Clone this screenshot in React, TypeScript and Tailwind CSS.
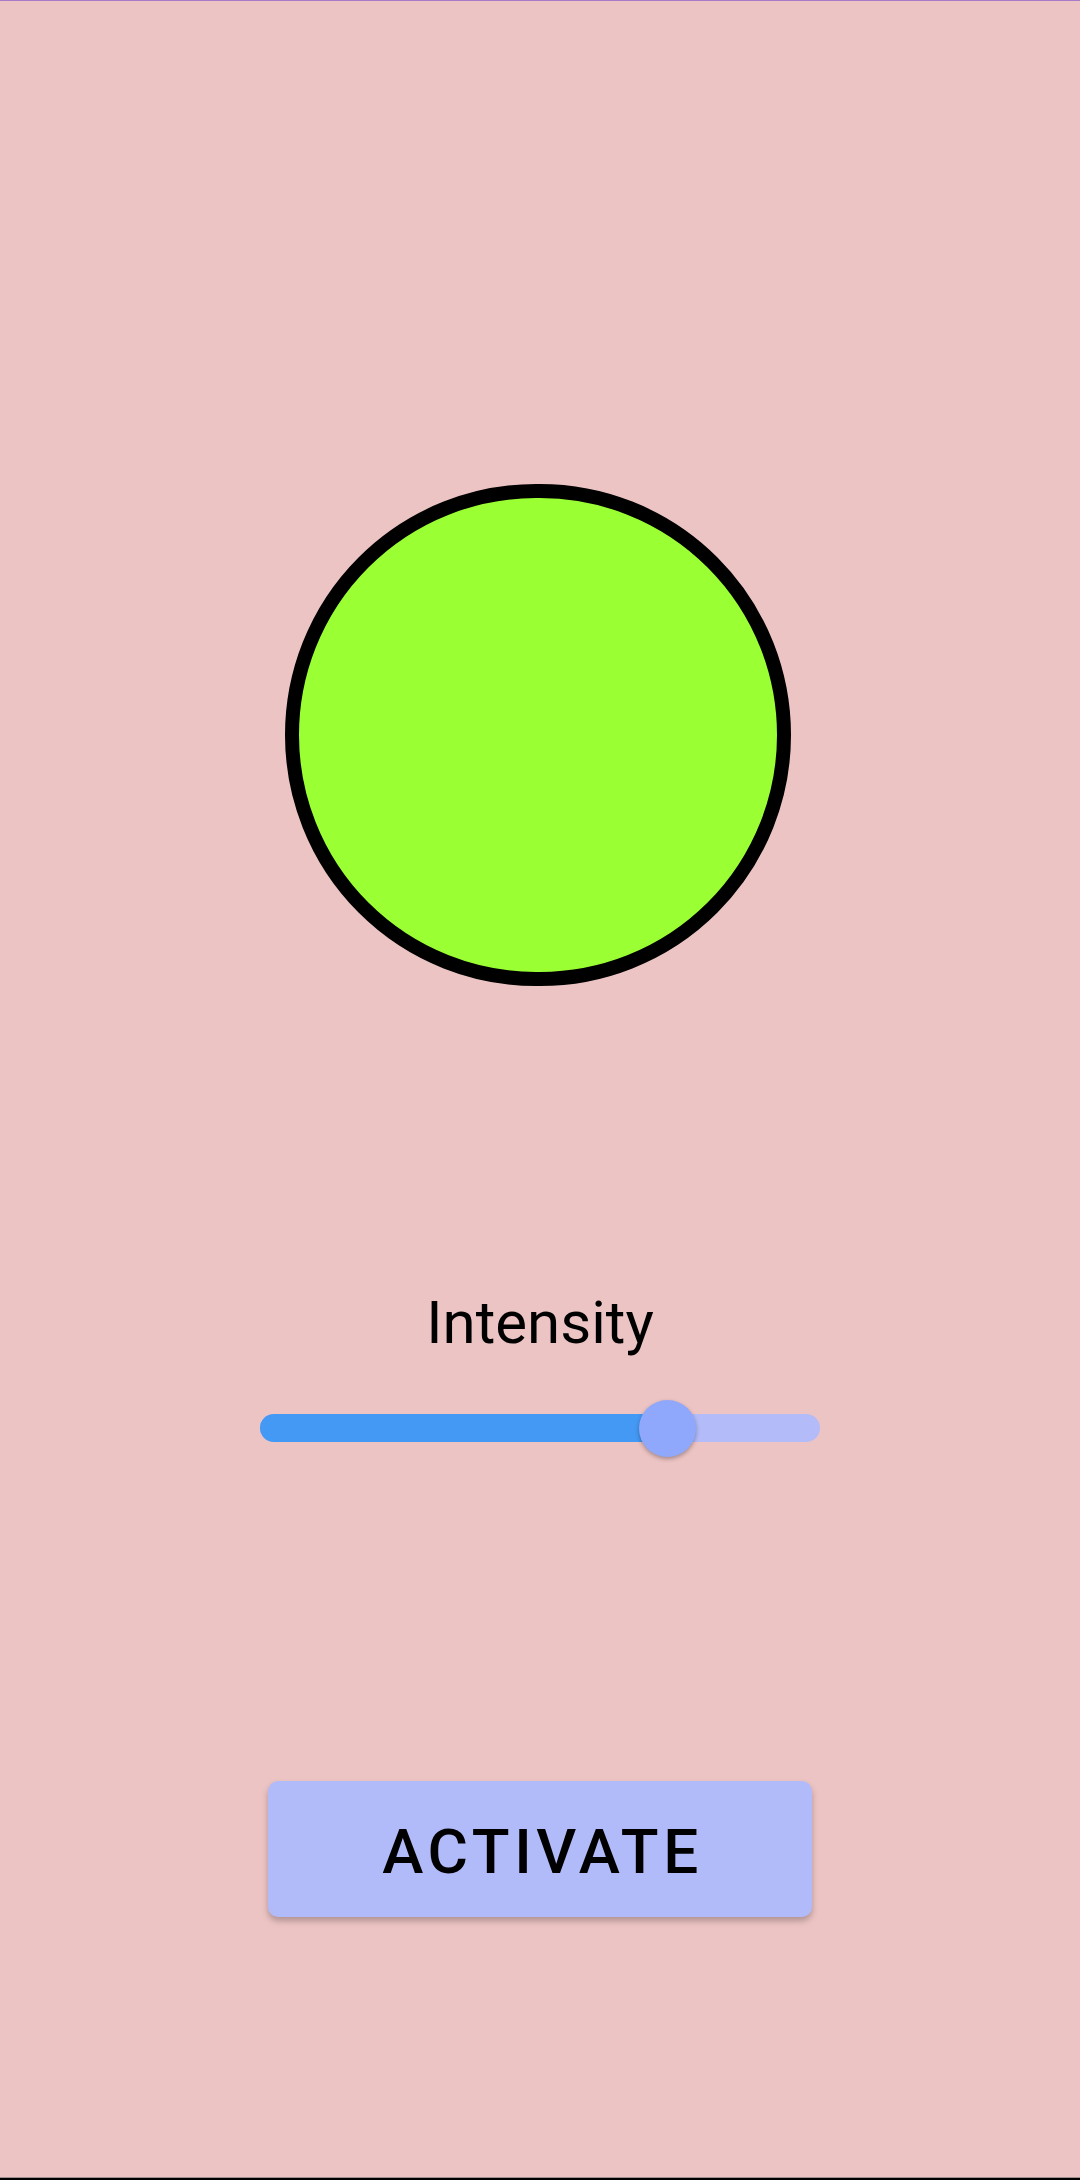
import React from "react";

export default function App() {
  return (
    <div
      className="w-[1080px] h-[2180px] bg-[#edc4c4] flex flex-col items-center"
      style={{ fontFamily: "Roboto, 'Noto Sans', sans-serif" }}
    >
      <div className="w-full h-[1px] bg-[#a77bc8] shrink-0" />
      <div className="mt-[483px] mr-[4px] w-[506px] h-[502px] rounded-full bg-[#9aff33] border-[14px] border-black shrink-0" />
      <div className="mt-[307px] text-[60px] leading-none text-black shrink-0">Intensity</div>
      <div className="mt-[47px] relative w-[560px] h-[56px] flex items-center shrink-0">
        <div className="w-full h-[28px] rounded-full bg-[#b3bbf9] flex">
          <div className="w-[407px] h-full rounded-l-full bg-[#4499f5]" />
        </div>
        <div className="absolute left-[379px] top-[0px] w-[57px] h-[57px] rounded-full bg-[#8fa8fb] shadow-[0_2px_4px_rgba(0,0,0,0.3)]" />
      </div>
      <button className="mt-[325px] w-[544px] h-[136px] rounded-[10px] bg-[#b2bbf9] shadow-[0_4px_6px_rgba(0,0,0,0.25)] flex items-center justify-center pt-[6px] pl-[5px] shrink-0">
        <span className="text-[62px] font-medium tracking-[0.075em] text-black leading-none">ACTIVATE</span>
      </button>
      <div className="flex-1" />
      <div className="w-full h-[1px] bg-[#a09090] shrink-0" />
      <div className="w-full h-[2px] bg-black shrink-0" />
    </div>
  );
}
